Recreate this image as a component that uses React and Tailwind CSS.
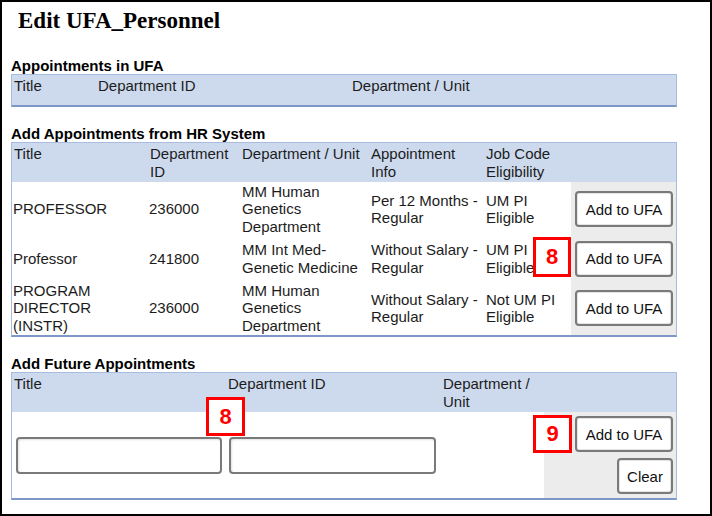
import React from "react";

const sans = { fontFamily: '"Liberation Sans", Arial, sans-serif' };

function Btn({ children, w = "w-[98px]" }) {
  return (
    <button
      className={`${w} h-[36px] bg-white border-2 border-[#7a7a7a] rounded-[4px] text-[15px] leading-none text-[#111] shadow-[inset_0_0_0_1px_#e4e4e4]`}
    >
      {children}
    </button>
  );
}

function Callout({ n, className }) {
  return (
    <div
      className={`absolute border-[3px] border-[#ff0000] bg-white flex items-center justify-center text-[22px] font-bold leading-none text-[#ff0000] ${className}`}
    >
      {n}
    </div>
  );
}

function Label({ children, className = "" }) {
  return <div className={`ml-[9px] h-[17px] text-[15px] leading-[17px] font-bold text-black ${className}`}>{children}</div>;
}

function Lines({ items }) {
  return (
    <div className="whitespace-nowrap">
      {items.map((t, i) => (
        <div key={i}>{t}</div>
      ))}
    </div>
  );
}

const hrRows = [
  {
    title: ["PROFESSOR"],
    id: "236000",
    unit: ["MM Human", "Genetics", "Department"],
    info: ["Per 12 Months -", "Regular"],
    job: ["UM PI", "Eligible"],
    h: "h-[54px]",
  },
  {
    title: ["Professor"],
    id: "241800",
    unit: ["MM Int Med-", "Genetic Medicine"],
    info: ["Without Salary -", "Regular"],
    job: ["UM PI", "Eligible"],
    h: "h-[45px]",
  },
  {
    title: ["PROGRAM", "DIRECTOR", "(INSTR)"],
    id: "236000",
    unit: ["MM Human", "Genetics", "Department"],
    info: ["Without Salary -", "Regular"],
    job: ["Not UM PI", "Eligible"],
    h: "h-[54px]",
  },
];

const hrCols = "grid grid-cols-[136px_92px_129px_115px_87px_105px]";

export default function App() {
  return (
    <div className="relative w-[712px] h-[516px] bg-white text-[15px] leading-[17.5px] text-[#1c1c1c]" style={sans}>
      <div className="w-full h-full border-2 border-black flex flex-col">
        <div
          className="ml-[16px] mt-[5px] h-[28px] text-[23px] leading-[28px] font-bold text-black"
          style={{ fontFamily: '"Liberation Serif", "Times New Roman", serif' }}
        >
          Edit UFA_Personnel
        </div>

        {/* Appointments in UFA */}
        <Label className="mt-[22px]">Appointments in UFA</Label>
        <div className="ml-[9px] w-[666px] border border-[#a9bce0] border-b-2 border-b-[#7f97c6] bg-[#cddaee]">
          <div className="grid grid-cols-[84px_254px_326px] h-[30px] pt-[2px]">
            <div className="pl-[2px]">Title</div>
            <div className="pl-[2px]">Department ID</div>
            <div className="pl-[2px]">Department / Unit</div>
          </div>
        </div>

        {/* Add Appointments from HR System */}
        <Label className="mt-[18px]">Add Appointments from HR System</Label>
        <div className="ml-[9px] w-[666px] border border-[#a9bce0] border-b-2 border-b-[#7f97c6]">
          <div className={`${hrCols} h-[39px] pt-[2px] bg-[#cddaee]`}>
            <div className="pl-[2px]">Title</div>
            <div className="pl-[2px]"><Lines items={["Department", "ID"]} /></div>
            <div className="pl-[2px] whitespace-nowrap">Department / Unit</div>
            <div className="pl-[2px]"><Lines items={["Appointment", "Info"]} /></div>
            <div className="pl-[2px]"><Lines items={["Job Code", "Eligibility"]} /></div>
            <div />
          </div>
          {hrRows.map((r, i) => (
            <div key={i} className={`${hrCols} ${r.h}`}>
              <div className="pl-[1px] flex items-center"><Lines items={r.title} /></div>
              <div className="pl-[1px] flex items-center">{r.id}</div>
              <div className="pl-[2px] flex items-center"><Lines items={r.unit} /></div>
              <div className="pl-[2px] flex items-center"><Lines items={r.info} /></div>
              <div className="pl-[2px] flex items-center"><Lines items={r.job} /></div>
              <div className="bg-[#ececec] flex items-center justify-end pr-[3px]">
                <Btn>Add to UFA</Btn>
              </div>
            </div>
          ))}
        </div>

        {/* Add Future Appointments */}
        <Label className="mt-[18px]">Add Future Appointments</Label>
        <div className="ml-[9px] w-[666px] border border-[#a9bce0] border-b-2 border-b-[#7f97c6]">
          <div className="grid grid-cols-[214px_215px_103px_132px] h-[39px] pt-[2px] bg-[#cddaee]">
            <div className="pl-[2px]">Title</div>
            <div className="pl-[2px]">Department ID</div>
            <div className="pl-[2px]"><Lines items={["Department /", "Unit"]} /></div>
            <div />
          </div>
          <div className="grid grid-cols-[214px_215px_103px_132px] h-[86px]">
            <div className="flex items-center pl-[4px]">
              <input className="w-[206px] h-[37px] border-2 border-[#7a7a7a] rounded-[4px] bg-white shadow-[inset_1px_1px_2px_rgba(0,0,0,0.12)]" />
            </div>
            <div className="flex items-center pl-[3px]">
              <input className="w-[207px] h-[37px] border-2 border-[#7a7a7a] rounded-[4px] bg-white shadow-[inset_1px_1px_2px_rgba(0,0,0,0.12)]" />
            </div>
            <div />
            <div className="bg-[#ececec] flex flex-col items-end pr-[3px] pt-[4px] gap-[6px]">
              <Btn>Add to UFA</Btn>
              <Btn w="w-[56px]">Clear</Btn>
            </div>
          </div>
        </div>
      </div>

      <Callout n="8" className="left-[533px] top-[237px] w-[38px] h-[40px]" />
      <Callout n="8" className="left-[206px] top-[397px] w-[39px] h-[39px]" />
      <Callout n="9" className="left-[533px] top-[415px] w-[39px] h-[38px]" />
    </div>
  );
}
